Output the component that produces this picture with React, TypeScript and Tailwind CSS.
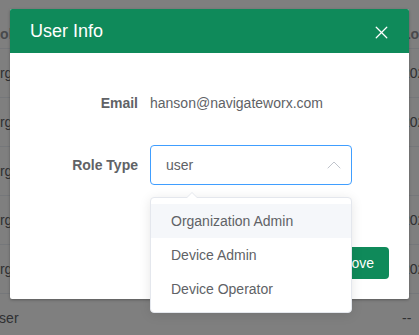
import { ChevronUp, X } from 'lucide-react'

const ROWS = [
  { role: 'Organization Admin', date: '2023-08-14 10:22:31' },
  { role: 'Organization Admin', date: '2023-08-12 09:41:05' },
  { role: 'Organization Admin', date: '' },
  { role: 'Organization Admin', date: '2023-07-30 16:02:47' },
  { role: 'Organization Admin', date: '2023-07-21 11:15:10' },
  { role: 'User', date: '--' }
]

const OPTIONS = ['Organization Admin', 'Device Admin', 'Device Operator']

export default function App() {
  return (
    <div className="relative h-[335px] w-[419px] overflow-hidden bg-white font-['Liberation_Sans',Arial,sans-serif] text-[14px] text-[#606266]">
      {/* Table behind the dialog */}
      <div className="flex flex-col pt-[21px]">
        <div className="flex h-[28px] items-center border-b border-[#ebeef5] font-bold text-[#909399]">
          <span className="-ml-[10px] w-[412px] shrink-0">Role</span>
          <span className="whitespace-nowrap">Login Time</span>
        </div>
        {ROWS.map((r, i) => (
          <div
            key={i}
            className={`flex h-[49px] items-center ${i < ROWS.length - 1 ? 'border-b border-[#ebeef5]' : ''}`}
          >
            <span className="-ml-[11px] w-[413px] shrink-0 whitespace-nowrap">{r.role}</span>
            <span className="whitespace-nowrap">{r.date}</span>
          </div>
        ))}
      </div>

      {/* Overlay */}
      <div className="absolute inset-0 bg-black/50" />

      {/* Dialog */}
      <div className="absolute left-[10px] top-[9px] w-[399px] overflow-hidden rounded-[2px] bg-white shadow-[0_1px_3px_rgba(0,0,0,0.3)]">
        <div className="flex h-[44px] items-center justify-between bg-[#0f8a5a] pl-5 pr-[17px]">
          <span className="text-[18px] leading-6 text-white">User Info</span>
          <X size={21} strokeWidth={1.5} className="mt-[2px] text-white" />
        </div>

        <div className="flex flex-col gap-[22px] px-5 pb-[52px] pt-[30px]">
          <div className="flex h-10 items-center">
            <label className="w-[120px] pr-3 text-right font-bold">Email</label>
            <span>hanson@navigateworx.com</span>
          </div>
          <div className="flex h-10 items-center">
            <label className="w-[120px] pr-3 text-right font-bold">Role Type</label>
            <div className="flex h-10 w-[202px] items-center justify-between rounded-[4px] border border-[#409eff] pl-[15px] pr-[5px]">
              <span>user</span>
              <ChevronUp size={24} strokeWidth={1} className="text-[#c0c4cc]" />
            </div>
          </div>
        </div>

        <div className="flex justify-end gap-[10px] px-5 pb-5 pt-[10px]">
          <button className="rounded-[4px] border border-[#dcdfe6] px-[15px] py-[8px] leading-[14px] text-[#606266]">
            Cancel
          </button>
          <button className="rounded-[4px] bg-[#0f8a5a] px-[15px] py-[9px] leading-[14px] text-white">
            Approve
          </button>
        </div>
      </div>

      {/* Select dropdown */}
      <div className="absolute left-[150px] top-[197px] w-[202px] rounded-[4px] border border-[#e4e7ed] bg-white py-[6px] shadow-[0_2px_12px_rgba(0,0,0,0.1)]">
        <div className="absolute -top-[6px] left-[35px] h-0 w-0 border-x-[6px] border-b-[6px] border-x-transparent border-b-[#e4e7ed]" />
        <div className="absolute -top-[5px] left-[36px] h-0 w-0 border-x-[5px] border-b-[5px] border-x-transparent border-b-white" />
        {OPTIONS.map((o, i) => (
          <div
            key={o}
            className={`flex h-[34px] items-center px-5 ${i === 0 ? 'bg-[#f5f7fa]' : ''}`}
          >
            {o}
          </div>
        ))}
      </div>
    </div>
  )
}
